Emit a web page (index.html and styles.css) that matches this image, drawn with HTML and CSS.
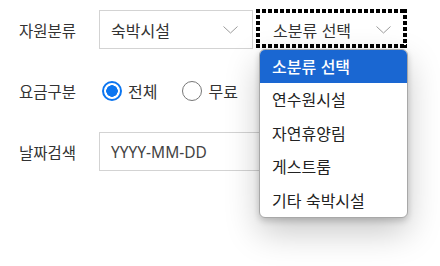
FILE: index.html
```html
<!DOCTYPE html>
<html lang="ko">
<head>
<meta charset="utf-8">
<link rel="stylesheet" href="styles.css">
</head>
<body>
<div class="form">
  <div class="row">
    <div class="label">자원분류</div>
    <div class="select">
      <span>숙박시설</span>
      <svg class="chev" width="15" height="8" viewBox="0 0 15 8"><polyline points="0.5,0.5 7.5,7 14.5,0.5" fill="none" stroke="#9a9a9a" stroke-width="1"/></svg>
    </div>
    <div class="select focus">
      <span>소분류 선택</span>
      <svg class="chev" width="15" height="8" viewBox="0 0 15 8"><polyline points="0.5,0.5 7.5,7 14.5,0.5" fill="none" stroke="#9a9a9a" stroke-width="1"/></svg>
      <ul class="menu">
        <li class="sel">소분류 선택</li>
        <li>연수원시설</li>
        <li>자연휴양림</li>
        <li>게스트룸</li>
        <li>기타 숙박시설</li>
      </ul>
    </div>
  </div>
  <div class="row">
    <div class="label">요금구분</div>
    <div class="radios">
      <span class="radio on"></span><span class="rtext">전체</span>
      <span class="radio off"></span><span class="rtext">무료</span>
    </div>
  </div>
  <div class="row">
    <div class="label">날짜검색</div>
    <div class="date">YYYY-MM-DD</div>
  </div>
</div>
</body>
</html>
```
FILE: styles.css
```css
html, body { margin: 0; padding: 0; background: #fff; }
body {
  font-family: "Noto Sans CJK KR", "Noto Sans", sans-serif;
  font-size: 16px;
  color: #333;
  width: 440px;
  height: 266px;
  overflow: hidden;
}
.form {
  padding: 10px 0 0 19px;
  display: flex;
  flex-direction: column;
  gap: 22px;
}
.row {
  display: flex;
  align-items: center;
  height: 39px;
}
.label {
  width: 80px;
  flex: none;
  color: #333;
  line-height: 20px;
  font-size: 15.5px;
}
.select {
  position: relative;
  box-sizing: border-box;
  width: 154px;
  height: 39px;
  border: 1px solid #d3d3d3;
  background: #fff;
  display: flex;
  align-items: center;
  justify-content: space-between;
  padding: 0 14px 0 11px;
  color: #333;
  flex: none;
}
.select.focus {
  margin-left: 3px;
  width: 151px;
  border-color: transparent;
  padding: 0 15px 0 16px;
}
.select.focus::after {
  content: "";
  position: absolute;
  inset: -2px -1px 0 -1px;
  background:
    repeating-linear-gradient(90deg, #000 0 4px, transparent 4px 6px) top / 100% 4px no-repeat,
    repeating-linear-gradient(90deg, #000 0 4px, transparent 4px 6px) bottom / 100% 4px no-repeat,
    repeating-linear-gradient(180deg, #000 0 4px, transparent 4px 6px) left / 4px 100% no-repeat,
    repeating-linear-gradient(180deg, #000 0 4px, transparent 4px 6px) right / 4px 100% no-repeat;
  pointer-events: none;
}
.chev { display: block; }
.menu {
  position: absolute;
  left: 2px;
  top: 38px;
  width: 147px;
  margin: 0;
  padding: 0;
  list-style: none;
  background: #fff;
  border: 1px solid #a8a8a8;
  border-radius: 6px;
  overflow: hidden;
  box-shadow: 0 3px 6px rgba(0,0,0,0.18), 0 14px 34px rgba(0,0,0,0.22);
  z-index: 5;
}
.menu li {
  height: 33.4px;
  line-height: 33px;
  padding-left: 12px;
  color: #222;
  white-space: nowrap;
}
.menu li.sel {
  background: #1a67d2;
  color: #fff;
  font-weight: 500;
}
.radios {
  display: flex;
  align-items: center;
  padding-left: 3px;
}
.radio {
  box-sizing: border-box;
  width: 20px;
  height: 20px;
  border-radius: 50%;
  flex: none;
}
.radio.on {
  border: 2px solid #0b75f0;
  background: radial-gradient(circle, #0b75f0 0 5.5px, #fff 6px);
}
.radio.off {
  border: 1.5px solid #777;
  background: #fff;
  margin-left: 25px;
}
.rtext {
  margin-left: 6px;
  color: #333;
}
.date {
  box-sizing: border-box;
  width: 308px;
  height: 39px;
  border: 1px solid #d3d3d3;
  display: flex;
  align-items: center;
  padding-left: 11px;
  color: #444;
  font-family: "Noto Sans", "Noto Sans CJK KR", sans-serif;
  font-size: 15.5px;
}
```
